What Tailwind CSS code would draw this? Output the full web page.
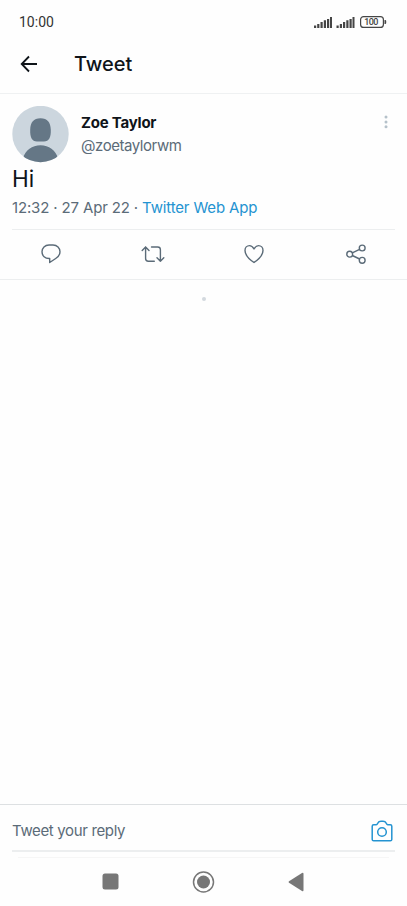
<!DOCTYPE html>
<html lang="en">
<head>
<meta charset="utf-8">
<title>Tweet</title>
<script src="https://cdn.jsdelivr.net/npm/@tailwindcss/browser@4"></script>
</head>
<body class="bg-white">
<div class="flex h-[906px] w-[407px] flex-col overflow-hidden bg-[#fefefe] font-['Inter',sans-serif] whitespace-nowrap text-[#0f1419]">
  <div class="flex h-[44px] shrink-0 items-center justify-between pr-[20px] pl-[19px]">
    <span class="font-['Roboto',sans-serif] text-[14px] font-normal text-[#333]">10:00</span>
    <svg width="74" height="14" viewBox="0 0 74 14" class="text-[#454545]">
      <g fill="currentColor">
        <path d="M1 10.500h2.200v2.500h-2.200zM4.200 9h2.200v4h-2.200zM7.500 7h2.200v6h-2.200zM10.800 5.200h2.200v7.800h-2.200zM14 4h2.200v9h-2.200zM17 2h2v11h-2z"/>
        <path d="M23.500 10.500h2.200v2.500h-2.200zM26.800 9h2.200v4h-2.200zM30 7h2.200v6h-2.200zM33.300 5.200h2.200v7.800h-2.200zM36.500 4h2.200v9h-2.200zM39.500 2h2v11h-2z"/>
        <path d="M71.500 5h.7q1 0 1 1v2q0 1-1 1h-.7z"/>
        <text x="58.300" y="10.200" text-anchor="middle" textLength="14" font-family="Roboto" font-size="9" font-weight="500">100</text>
      </g>
      <rect x="47.600" y="1.600" width="22.800" height="10.800" rx="3" fill="none" stroke="currentColor" stroke-width="1.200"/>
    </svg>
  </div>
  <header class="flex h-[50px] shrink-0 items-center border-b border-[#eff1f2] pb-[9px] pl-[20px]">
    <svg width="18" height="18" viewBox="0 0 18 18" fill="none" stroke="#0f1419" stroke-width="1.800"><path d="M17 9H2M9 1.500L1.700 9L9 16.500"/></svg>
    <h1 class="ml-[36px] text-[20px] font-medium">Tweet</h1>
  </header>
  <main class="flex grow flex-col">
    <div class="flex h-[68px] shrink-0 px-[12px] pt-[12px]">
      <svg width="57" height="57" viewBox="0 0 57 57" class="shrink-0">
        <defs><clipPath id="face"><circle cx="28.500" cy="28" r="28.200"/></clipPath></defs>
        <g clip-path="url(#face)"><path fill="#ccd6de" d="M0 0h57v57H0z"/><path fill="#657786" d="M28.500 12.200c7 0 10 4 10.300 11.500.3 7.500-1.800 11.700-6.800 11.700h-7c-5 0-7.100-4.200-6.800-11.700.3-7.500 3.300-11.500 10.300-11.500zM11 57V52c2.500-8 9-12.800 17.500-12.800S43.500 44 46 52v5z"/></g>
      </svg>
      <div class="ml-[12px] grow pt-[5px]">
        <div class="text-[15px] leading-[23px] font-bold tracking-[-0.22px]">Zoe Taylor</div>
        <div class="text-[15px] leading-[23px] tracking-[-0.45px] text-[#5b6b78]">@zoetaylorwm</div>
      </div>
      <svg width="4" height="14" viewBox="0 0 4 14" fill="#b5c1ca" class="mt-[9px] mr-[7px]"><circle cx="2" cy="2" r="1.500"/><circle cx="2" cy="7" r="1.500"/><circle cx="2" cy="11.800" r="1.500"/></svg>
    </div>
    <p class="h-[33px] shrink-0 pl-[12px] text-[22.500px] leading-[34px]">Hi</p>
    <div class="mx-[12px] h-[35px] shrink-0 border-b border-[#eceeef] text-[15px] leading-[25px] tracking-[-0.15px] text-[#5b6b78]">12:32 · 27 Apr 22 · <a class="text-[#2493d1]">Twitter Web App</a></div>
    <div class="grid h-[50px] shrink-0 grid-cols-4 place-items-center border-b border-[#eceeef] pb-px text-[#5b6b78]">
      <svg width="22" height="22" viewBox="0 0 22 22" fill="none" stroke="currentColor" stroke-width="1.400" stroke-linejoin="round"><path d="M9 2h4c4.100 0 7 3 7 6.700 0 3-1.600 5.100-4.300 6.800l-6 4v-4C5 15.700 2 12.800 2 8.800 2 5 4.900 2 9 2z"/></svg>
      <svg width="26" height="22" viewBox="0 0 26 22" fill="none" stroke="currentColor" stroke-width="1.400" stroke-linecap="round" stroke-linejoin="round"><path d="M2.200 7.500l3.400-3.500 3.400 3.500M5.600 4v11.500q0 2.700 2.700 2.700h6M11.500 4h6.200q2.700 0 2.700 2.700v11.500M17 14.800l3.400 3.500 3.400-3.500"/></svg>
      <svg width="22" height="22" viewBox="0 0 22 22" fill="none" stroke="currentColor" stroke-width="1.400" stroke-linejoin="round"><path d="M11 6C9.800 3.800 8.400 2.600 6.500 2.600 3.900 2.600 2 4.700 2 7.500c0 4.800 4.700 9.100 9 12 4.300-2.900 9-7.200 9-12 0-2.800-1.900-4.900-4.500-4.900-1.900 0-3.300 1.200-4.500 3.400z"/></svg>
      <svg width="22" height="22" viewBox="0 0 22 22" fill="none" stroke="currentColor" stroke-width="1.400"><circle cx="4.700" cy="11.200" r="2.900"/><circle cx="17.200" cy="5" r="2.900"/><circle cx="17.200" cy="17.300" r="2.900"/><path d="M7.300 9.900l7.300-3.600M7.300 12.500l7.300 3.500"/></svg>
    </div>
    <div class="mx-auto mt-[17px] size-[4px] rounded-full bg-[#d3d9de]"></div>
  </main>
  <footer class="h-[102px] shrink-0 border-t border-[#dde0e2]">
    <div class="mx-[12px] flex h-[47px] items-center justify-between border-b-2 border-[#eceeef] pt-[6px]">
      <span class="pt-[2px] text-[15px] tracking-[-0.35px] text-[#5b6b78]">Tweet your reply</span>
      <svg width="24" height="24" viewBox="0 0 24 24" fill="none" stroke="#2493d1" stroke-width="1.500" stroke-linejoin="round" class="mr-px"><path d="M3.700 5.700H6q.8 0 1.200-.6l.8-1.200Q8.700 2.200 11 2.200h2q2.300 0 3 1.700l.8 1.200q.4.600 1.200.6h2.300q1.500 0 1.500 1.500v13.300q0 1.300-1.500 1.300H3.700q-1.500 0-1.500-1.300V7.200q0-1.500 1.500-1.500z"/><circle cx="12" cy="13" r="4.300"/></svg>
    </div>
    <div class="mx-[18px] mt-[5px] h-px bg-[#f6f6f6]"></div>
    <nav class="flex h-[47px] items-center pl-[102px] text-[#777]">
      <svg width="17" height="17" viewBox="0 0 17 17" fill="currentColor"><rect x=".5" y=".5" width="16" height="16" rx="2.500"/></svg>
      <svg width="23" height="22" viewBox="0 0 23 22" class="ml-[73px]"><circle cx="11.500" cy="11" r="10" fill="none" stroke="currentColor" stroke-width="1.500"/><circle cx="11.500" cy="11" r="6.500" fill="currentColor"/></svg>
      <svg width="17" height="20" viewBox="0 0 17 20" fill="currentColor" class="ml-[73px]"><path d="M1 9.200L14 1q1.500-.8 1.500 1v16q0 1.800-1.500 1L1 10.800q-1-.8 0-1.600z"/></svg>
    </nav>
  </footer>
</div>
</body>
</html>
